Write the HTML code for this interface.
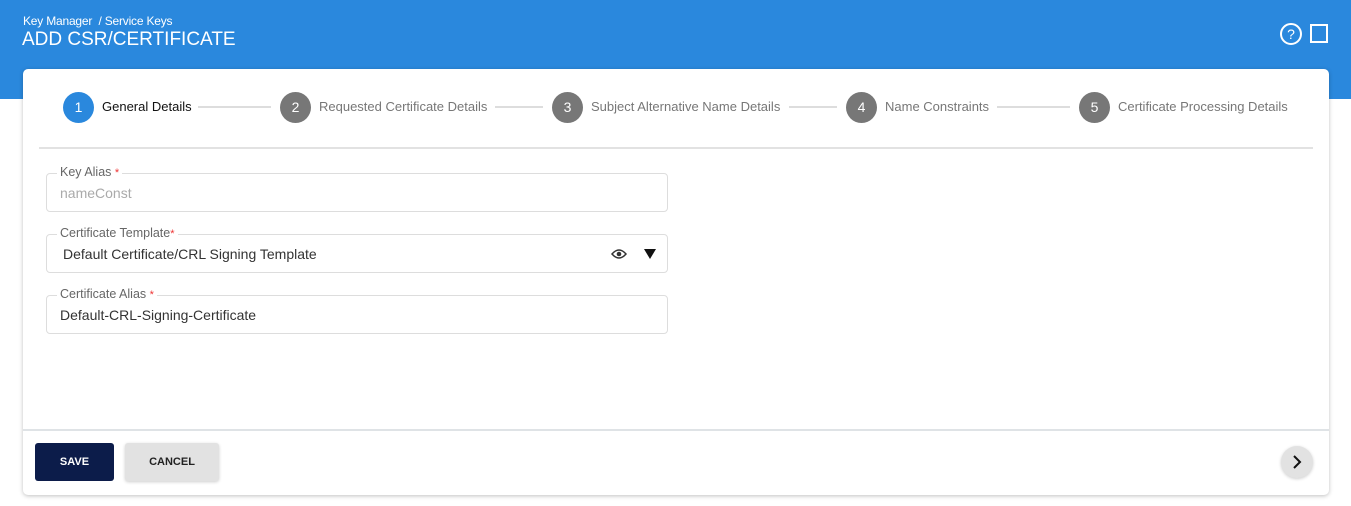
<!DOCTYPE html>
<html><head><style>
*{box-sizing:border-box;margin:0;padding:0}
body{width:1351px;height:506px;background:#fff;font-family:"Liberation Sans",Arial,sans-serif;position:relative;overflow:hidden}
.hdr{position:absolute;left:0;top:0;width:1351px;height:99px;background:#2a88dd}
.bc{position:absolute;left:23px;top:14px;color:#fff;font-size:12px;letter-spacing:-0.2px}
.tt{position:absolute;left:22px;top:29px;color:#fff;font-size:19px}
.card{position:absolute;left:23px;top:69px;width:1306px;height:426px;background:#fff;border-radius:5px;box-shadow:0 1px 4px rgba(0,0,0,.25)}
.c{position:absolute;width:31px;height:31px;border-radius:50%;background:#777;color:#fff;font-size:14px;text-align:center;line-height:31px;top:92px}
.l{position:absolute;top:99px;font-size:13px;color:#777}
.ln{position:absolute;top:106px;height:2px;background:#ddd}
.f{position:absolute;left:46px;width:622px;height:39px;border:1px solid #ddd;border-radius:4px}
.lab{position:absolute;left:10px;top:-9px;background:#fff;padding:0 3px;font-size:12.5px;color:#666}
.lab b{color:#e33;font-weight:normal;font-size:11px}
.v{position:absolute;left:13px;top:11px;font-size:14px;color:#333}
.btn{position:absolute;top:443px;height:38px;border-radius:3px;font-size:11px;font-weight:bold;text-align:center;line-height:38px}
</style></head><body>
<div class="hdr"></div>
<div class="bc">Key Manager&nbsp; / Service Keys</div>
<div class="tt">ADD CSR/CERTIFICATE</div>
<svg style="position:absolute;left:1280px;top:23px" width="50" height="24"><circle cx="11" cy="11" r="10" fill="none" stroke="#fff" stroke-width="2"/><text x="11" y="16" font-size="14" fill="#fff" text-anchor="middle" font-family="Liberation Sans">?</text><rect x="31" y="2" width="16" height="17" fill="none" stroke="#fff" stroke-width="2"/></svg>
<div class="card"></div>
<div class="c" style="left:63px;background:#2a88dd">1</div><div class="l" style="left:102px;color:#111">General Details</div>
<div class="ln" style="left:198px;width:73px"></div>
<div class="c" style="left:280px">2</div><div class="l" style="left:319px">Requested Certificate Details</div>
<div class="ln" style="left:495px;width:48px"></div>
<div class="c" style="left:552px">3</div><div class="l" style="left:591px">Subject Alternative Name Details</div>
<div class="ln" style="left:789px;width:48px"></div>
<div class="c" style="left:846px">4</div><div class="l" style="left:885px">Name Constraints</div>
<div class="ln" style="left:997px;width:73px"></div>
<div class="c" style="left:1079px">5</div><div class="l" style="left:1118px">Certificate Processing Details</div>
<div style="position:absolute;left:39px;top:147px;width:1274px;height:2px;background:#e2e2e2"></div>
<div class="f" style="top:173px"><div class="lab">Key Alias <b>*</b></div><div class="v" style="color:#aaa">nameConst</div></div>
<div class="f" style="top:234px"><div class="lab">Certificate Template<b>*</b></div><div class="v" style="left:16px">Default Certificate/CRL Signing Template</div>
<svg style="position:absolute;left:564px;top:12px" width="16" height="14"><path d="M1 7 Q8 -1 15 7 Q8 15 1 7Z" fill="none" stroke="#333" stroke-width="1.5"/><circle cx="8" cy="7" r="2.3" fill="#333"/></svg>
<svg style="position:absolute;left:597px;top:14px" width="12" height="10"><path d="M0 0H12L6 10Z" fill="#111"/></svg></div>
<div class="f" style="top:295px"><div class="lab">Certificate Alias <b>*</b></div><div class="v">Default-CRL-Signing-Certificate</div></div>
<div style="position:absolute;left:23px;top:429px;width:1306px;height:2px;background:#dfe3e6"></div>
<div class="btn" style="left:35px;width:79px;background:#0c1c4a;color:#fff">SAVE</div>
<div class="btn" style="left:125px;width:94px;background:#e2e2e2;color:#222;box-shadow:0 1px 3px rgba(0,0,0,.2)">CANCEL</div>
<div style="position:absolute;left:1281px;top:446px;width:32px;height:32px;border-radius:50%;background:#e2e2e2;box-shadow:0 1px 3px rgba(0,0,0,.2)"><svg width="32" height="32"><path d="M13 10l6 6-6 6" fill="none" stroke="#111" stroke-width="2"/></svg></div>
</body></html>
